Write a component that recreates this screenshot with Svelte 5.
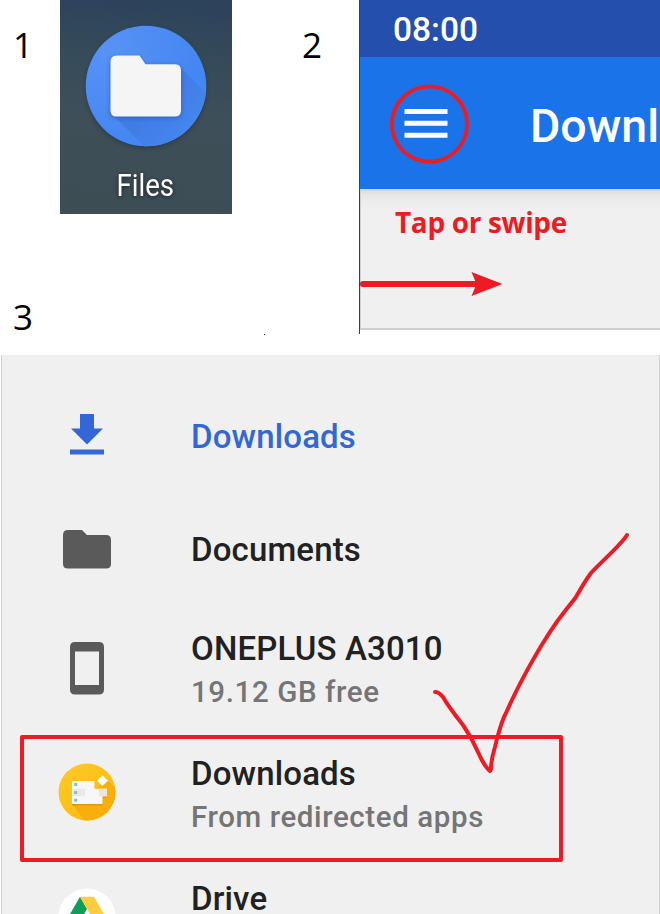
<script>
  const drawer = [
    { icon: 'download', title: 'Downloads', active: true },
    { icon: 'folder', title: 'Documents' },
    { icon: 'device', title: 'ONEPLUS A3010', sub: '19.12 GB free' },
    { icon: 'redirect', title: 'Downloads', sub: 'From redirected apps' },
    { icon: 'drive', title: 'Drive', sub: '' }
  ];
</script>

<main class="page">
  <section class="top">
    <div class="steps">
      <span class="num">1</span>
      <span class="num">3</span>
    </div>

    <div class="launcher">
      <svg class="app" width="128" height="132" viewBox="0 0 128 132">
        <defs>
          <radialGradient id="disc" cx="20%" cy="22%" r="75%">
            <stop offset="0" stop-color="#5892f5" />
            <stop offset="1" stop-color="#4487f2" />
          </radialGradient>
          <linearGradient id="cast" gradientUnits="userSpaceOnUse" x1="64" y1="64" x2="106" y2="106">
            <stop offset="0.3" stop-color="#417ce4" />
            <stop offset="1" stop-color="#4585ef" />
          </linearGradient>
          <clipPath id="round"><circle cx="64" cy="64" r="60.3" /></clipPath>
          <filter id="soft" x="-20%" y="-20%" width="140%" height="150%"><feGaussianBlur stdDeviation="2" /></filter>
        </defs>
        <circle cx="64" cy="66" r="60" fill="#1c2c3a" opacity=".55" filter="url(#soft)" />
        <circle cx="64" cy="64" r="60.3" fill="url(#disc)" />
        <g clip-path="url(#round)">
          <path d="M97 44 L170 117 L117 180 L30 92 Z" fill="url(#cast)" />
          <path d="M35 35h21l7 8h30q6 0 6 6v41q0 6-6 6H34q-6 0-6-6V41q0-6 7-6z" fill="#1f4fae" opacity=".55" filter="url(#soft)" />
        </g>
        <path d="M35 33.5h22.500l6 8.700H93q6 0 6 6v40.300q0 6-6 6H34.500q-6 0-6-6V39.500q0-6 6.500-6z" fill="#f5f5f5" />
      </svg>
      <span class="label">Files</span>
    </div>

    <div class="second"><span class="num">2</span></div>
    <i class="speck"></i>

    <div class="screen">
      <div class="status">08:00</div>
      <div class="bar">
        <svg class="menu" width="80" height="80" viewBox="0 0 80 80">
          <path d="M14.500 27.500h43M14.500 39.300h43M14.500 51.200h43" stroke="#fff" stroke-width="5" />
          <circle cx="39.500" cy="40" r="37.600" fill="none" stroke="#ed1c24" stroke-width="3.800" />
        </svg>
        <span class="heading">Downl</span>
      </div>
      <div class="body">
        <span class="hint">Tap or swipe</span>
        <svg class="arrow" width="146" height="26" viewBox="0 0 146 26">
          <path d="M3 13h120" stroke="#ed1c24" stroke-width="6" stroke-linecap="round" />
          <path d="M111.500 1l31 12-31 12 5-12z" fill="#ed1c24" />
        </svg>
      </div>
    </div>
  </section>

  <section class="drawer">
    {#each drawer as item}
      <div class="row" class:double={item.sub !== undefined} class:active={item.active}>
        <div class="icon {item.icon}">
          {#if item.icon === 'download'}
            <svg width="34" height="41" viewBox="0 0 34 41" fill="#3367d6">
              <path d="M10 0h14v14.500h9L17 30.500 1 14.500h9zM0 35.500h34v5H0z" />
            </svg>
          {:else if item.icon === 'folder'}
            <svg width="48" height="39" viewBox="0 0 48 39" fill="#5a5a5a">
              <path d="M5 0h14l5 5h19q5 0 5 5v24q0 4.500-5 4.500H5q-5 0-5-4.500V5q0-5 5-5z" />
            </svg>
          {:else if item.icon === 'device'}
            <svg width="34" height="53" viewBox="0 0 34 53">
              <path fill="#5a5a5a" fill-rule="evenodd" d="M5 0h24q5 0 5 5v42.500q0 5-5 5H5q-5 0-5-5V5q0-5 5-5zM5 9.500v33.500h24v-33.500z" />
            </svg>
          {:else if item.icon === 'redirect'}
            <svg width="58" height="58" viewBox="0 0 58 58">
              <defs>
                <linearGradient id="gold" x1="0" y1="0" x2="1" y2="1">
                  <stop offset="0" stop-color="#ffca28" />
                  <stop offset="1" stop-color="#fbb80b" />
                </linearGradient>
                <clipPath id="coin"><circle cx="29" cy="29" r="28.500" /></clipPath>
              </defs>
              <circle cx="29" cy="29" r="28.500" fill="url(#gold)" />
              <path clip-path="url(#coin)" d="M50 17.700l20 20-30 38L14 41z" fill="#f9ae0b" />
              <path d="M14 18h22.500v8h12.500v8h-4.500v7.500H14z" fill="#c98a10" opacity=".5" transform="translate(0 1)" />
              <path d="M14 18h22.500v7.800h12.500v7.500h-4.500v7.700H14z" fill="#f7f7f7" />
              <path d="M14 25.800h13v7.500H14z" fill="#e9e9e9" />
              <path d="M41 25.800h8v7.500h-8z" fill="#f0e6d8" />
              <path d="M16.200 20h3v3h-3zM16.200 28h3v3h-3zM16.200 35.800h3v3h-3z" fill="#74c8bc" />
              <path d="M44.500 12.300l5.500 5.400-5.500 5.400-5.500-5.400z" fill="#fff" />
            </svg>
          {:else}
            <svg width="58" height="58" viewBox="0 0 58 58">
              <circle cx="29" cy="29" r="28.500" fill="#fff" />
              <path d="M22 8.700l7 12.300-15 26-7-12.300z" fill="#0f9d58" />
              <path d="M22 8.700h14l15 26H37z" fill="#ffcd40" />
              <path d="M21.500 34.700H51l-7 12.300H14z" fill="#4285f4" />
            </svg>
          {/if}
        </div>
        <div class="text">
          <div class="title">{item.title}</div>
          {#if item.sub}<div class="sub">{item.sub}</div>{/if}
        </div>
      </div>
    {/each}
  </section>

  <svg class="marks" width="660" height="914" viewBox="0 0 660 914" fill="none" stroke="#ed1c24" stroke-width="4" stroke-linejoin="round" stroke-linecap="round">
    <path d="M22 737H561V860H22z" />
    <path d="M435 692Q439 692 443 697Q448 706 463 725Q472 738 478 752Q484 766 490 771L491 769Q491 760 495 747Q501 722 506 713C520 681 545 636 565 611Q573 601 576 597Q585 581 591 573C601 562 621 545 627 535" />
  </svg>
</main>

<style>
  :global(body) { margin: 0; background: #fff; }
  .page {
    position: relative;
    width: 660px;
    height: 914px;
    overflow: hidden;
    background: #fff;
    display: flex;
    flex-direction: column;
    font-family: Roboto, "Liberation Sans", sans-serif;
  }
  .top { height: 355px; flex: none; display: flex; align-items: flex-start; position: relative; }
  .num { font: 35px/50px "Open Sans", "Noto Sans", sans-serif; color: #000; height: 50px; }
  .steps { width: 60px; height: 355px; box-sizing: border-box; padding: 20px 0 0 13px; display: flex; flex-direction: column; gap: 222px; }
  .launcher {
    width: 172px;
    height: 214px;
    background: linear-gradient(185deg, #2c415c 0, #354b59 28%, #3d4f59 52%, #3d4d54 100%);
    display: flex;
    flex-direction: column;
    align-items: center;
  }
  .app { margin-top: 22px; flex: none; }
  .label { color: #fff; font-size: 31px; line-height: 36px; margin: 14px 2px 0 0; text-shadow: 0 1px 5px #0009; transform: scaleX(.89); }
  .second { width: 127px; box-sizing: border-box; padding: 20px 0 0 70px; }
  .speck { position: absolute; left: 264px; top: 334px; width: 1px; height: 1px; background: #222; }
  .screen { width: 301px; height: 334px; box-sizing: border-box; border-left: 1px solid #3b3f5c; overflow: hidden; }
  .status { height: 57px; background: #244fad; color: #fff; font-size: 33.500px; line-height: 60px; font-weight: 500; padding-left: 33px; box-sizing: border-box; }
  .bar { height: 132px; background: #1a73e8; display: flex; align-items: flex-start; }
  .menu { margin: 26.500px 0 0 30px; flex: none; }
  .heading { margin: 39px 0 0 60px; color: #fff; font-size: 46.500px; line-height: 60px; font-weight: 500; white-space: nowrap; }
  .body {
    height: 141px;
    box-sizing: border-box;
    border-left: 1px solid #d0d0d0;
    border-bottom: 2px solid #d0d0d0;
    background: linear-gradient(#d6d6d6 0, #e5e5e5 5px, #ececec 12px, #f0f0f0 22px);
    display: flex;
    flex-direction: column;
    align-items: flex-start;
  }
  .hint { margin: 13px 0 0 34px; font: bold 28px/40px "Open Sans", "Noto Sans", sans-serif; letter-spacing: -.35px; color: #ed1c24; white-space: nowrap; }
  .arrow { margin: 29px 0 0 -1px; flex: none; }
  .drawer {
    flex: 1;
    min-height: 0;
    margin-left: 1px;
    box-sizing: border-box;
    border-left: 1px solid #d0d0d0;
    border-right: 1px solid #d0d0d0;
    background: #f0f0f0;
    padding-top: 25px;
    overflow: hidden;
  }
  .row { height: 113px; display: flex; align-items: center; color: #212121; }
  .row.double { height: 125px; }
  .icon { width: 170px; flex: none; display: flex; justify-content: center; }
  .icon svg { display: block; }
  .icon.download { padding-bottom: 4px; }
  .icon.folder, .icon.device { padding-bottom: 1px; }
  .icon.redirect, .icon.drive { padding-bottom: 3px; }
  .text { margin-left: 19px; white-space: nowrap; }
  .double .text { align-self: flex-start; padding-top: 22px; }
  .title { font-size: 33px; line-height: 42px; font-weight: 500; letter-spacing: .15px; }
  .sub { font-size: 29.500px; line-height: 44px; font-weight: 500; letter-spacing: .6px; color: #757575; }
  .active .title { color: #3367d6; }
  .marks { position: absolute; inset: 0; }
</style>
